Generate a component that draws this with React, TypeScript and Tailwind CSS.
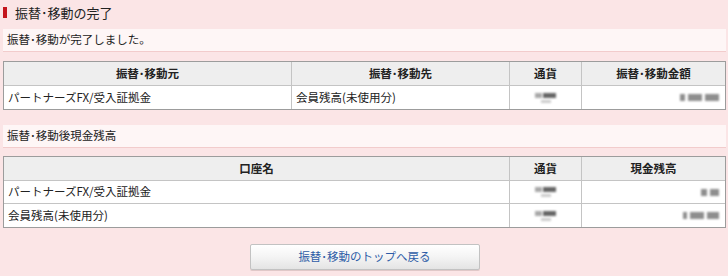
import React from "react";

const font = { fontFamily: '"Noto Sans CJK JP", "Noto Sans", sans-serif' };

function CurrencyBlur() {
  return (
    <span className="inline-flex flex-col items-center gap-[2px]">
      <span className="flex gap-[1px]">
        <span className="inline-block w-[7px] h-[5px] bg-[#a8a8a8] blur-[1px]" />
        <span className="inline-block w-[13px] h-[5px] bg-[#666666] blur-[1px]" />
      </span>
      <span className="inline-block w-[10px] h-[3px] bg-[#cccccc] blur-[1px]" />
    </span>
  );
}

function AmountBlur({ parts }: { parts: number[] }) {
  return (
    <span className="inline-flex gap-[3px] items-center">
      {parts.map((p, i) => (
        <span
          key={i}
          className="inline-block h-[7px] bg-[#8e8e8e] blur-[1.2px]"
          style={{ width: p }}
        />
      ))}
    </span>
  );
}

export default function App() {
  return (
    <div
      className="w-[728px] h-[276px] bg-[#fbe5e6] pl-[3px] pr-[2px] text-[11.5px] text-[#222] overflow-hidden"
      style={font}
    >
      <div className="h-[24px] flex items-center mb-[5px]">
        <span className="inline-block w-[4px] h-[11px] bg-[#c4141c]" />
        <span className="ml-[8px] text-[13px] text-[#222] leading-none">振替･移動の完了</span>
      </div>

      <div className="h-[23px] flex items-center px-[4px] bg-[#fef6f6] border-b border-[#f2cccc]">
        振替･移動が完了しました。
      </div>

      <div className="mt-[9px] border border-[#9c9c9c] bg-white">
        <div className="grid grid-cols-[288px_218px_72px_1fr]">
          <div className="h-[24px] flex items-center justify-center font-bold bg-[#eeeeee] border-b border-r border-[#c4c4c4]">振替･移動元</div>
          <div className="h-[24px] flex items-center justify-center font-bold bg-[#eeeeee] border-b border-r border-[#c4c4c4]">振替･移動先</div>
          <div className="h-[24px] flex items-center justify-center font-bold bg-[#eeeeee] border-b border-r border-[#c4c4c4]">通貨</div>
          <div className="h-[24px] flex items-center justify-center font-bold bg-[#eeeeee] border-b border-[#c4c4c4]">振替･移動金額</div>

          <div className="h-[23px] flex items-center px-[4px] border-r border-[#c4c4c4]">パートナーズFX/受入証拠金</div>
          <div className="h-[23px] flex items-center px-[4px] border-r border-[#c4c4c4]">会員残高(未使用分)</div>
          <div className="h-[23px] flex items-center justify-center border-r border-[#c4c4c4]">
            <CurrencyBlur />
          </div>
          <div className="h-[23px] flex items-center justify-end pr-[6px]">
            <AmountBlur parts={[5, 14, 14]} />
          </div>
        </div>
      </div>

      <div className="mt-[15px] h-[23px] flex items-center px-[4px] bg-[#fef6f6] border-b border-[#f2cccc]">
        振替･移動後現金残高
      </div>

      <div className="mt-[8px] border border-[#9c9c9c] bg-white">
        <div className="grid grid-cols-[506px_72px_1fr]">
          <div className="h-[24px] flex items-center justify-center font-bold bg-[#eeeeee] border-b border-r border-[#c4c4c4]">口座名</div>
          <div className="h-[24px] flex items-center justify-center font-bold bg-[#eeeeee] border-b border-r border-[#c4c4c4]">通貨</div>
          <div className="h-[24px] flex items-center justify-center font-bold bg-[#eeeeee] border-b border-[#c4c4c4]">現金残高</div>

          <div className="h-[23px] flex items-center px-[4px] border-b border-r border-[#c4c4c4]">パートナーズFX/受入証拠金</div>
          <div className="h-[23px] flex items-center justify-center border-b border-r border-[#c4c4c4]">
            <CurrencyBlur />
          </div>
          <div className="h-[23px] flex items-center justify-end pr-[6px] border-b border-[#c4c4c4]">
            <AmountBlur parts={[6, 9]} />
          </div>

          <div className="h-[23px] flex items-center px-[4px] border-r border-[#c4c4c4]">会員残高(未使用分)</div>
          <div className="h-[23px] flex items-center justify-center border-r border-[#c4c4c4]">
            <CurrencyBlur />
          </div>
          <div className="h-[23px] flex items-center justify-end pr-[6px]">
            <AmountBlur parts={[4, 14, 12]} />
          </div>
        </div>
      </div>

      <div className="mt-[16px] flex justify-center">
        <button
          className="w-[230px] h-[26px] rounded-[2px] border border-[#c2c2c2] bg-gradient-to-b from-[#ffffff] via-[#f4f4f4] to-[#e4e4e4] text-[#2d5ca6] text-[11.5px] flex items-center justify-center shadow-[0_1px_0_#e0c8c8]"
          style={font}
        >
          振替･移動のトップへ戻る
        </button>
      </div>
    </div>
  );
}
